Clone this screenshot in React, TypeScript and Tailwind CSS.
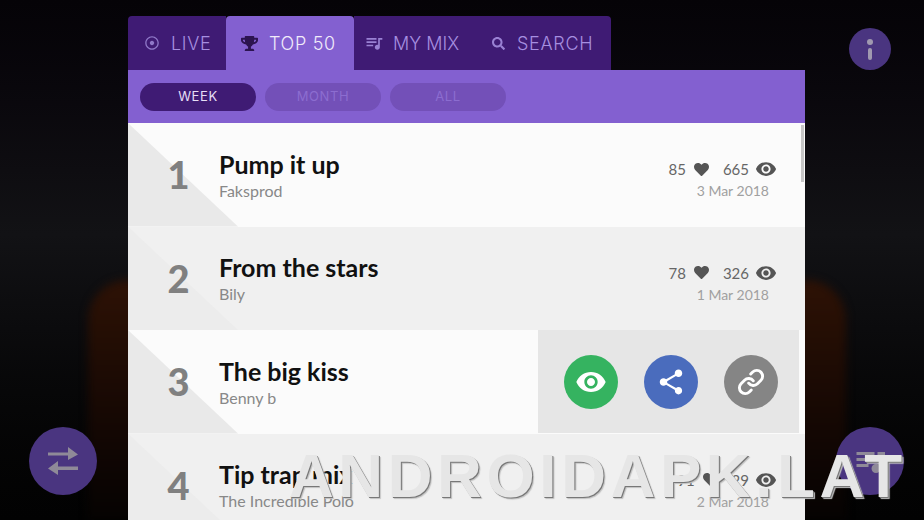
import React from "react";
import { FaRegDotCircle, FaTrophy, FaSearch, FaHeart } from "react-icons/fa";
import { MdQueueMusic, MdVisibility, MdShare } from "react-icons/md";
import { Link as LinkIcon } from "lucide-react";

const songs = [
  { rank: 1, title: "Pump it up", artist: "Faksprod", likes: 85, views: 665, date: "3 Mar 2018" },
  { rank: 2, title: "From the stars", artist: "Bily", likes: 78, views: 326, date: "1 Mar 2018" },
  { rank: 3, title: "The big kiss", artist: "Benny b", likes: 0, views: 0, date: "" },
  { rank: 4, title: "Tip trap mix", artist: "The Incredible Polo", likes: 91, views: 29, date: "2 Mar 2018" },
];

const SwapIcon = () => (
  <svg width="34" height="34" viewBox="0 0 34 34" fill="#8f8a98">
    <path d="M2 8.5h20V3l10 7.5L22 16v-4.5H2z" />
    <path d="M32 22.5H12V17L2 24.5 12 31v-5h20z" />
  </svg>
);

const Row = ({ song, even }: { song: (typeof songs)[number]; even: boolean }) => {
  return (
    <div className={`relative flex h-[103.5px] shrink-0 items-center ${even ? "bg-[#f0f0f0]" : "bg-[#fbfbfb]"}`}>
      {/* corner triangle */}
      <div
        className={`absolute bottom-0 left-0 h-full w-[110px] [clip-path:polygon(0_0,100%_100%,0_100%)] ${
          even ? "bg-[#ececec]" : "bg-[#e9e9e9]"
        }`}
      ></div>
      <div className="relative w-[91px] pl-[10px] text-center font-['Lato',sans-serif] text-[38px] font-black text-[#808080]">
        {song.rank}
      </div>
      <div className="relative flex flex-col">
        <div className="pb-[1px] font-['Lato',sans-serif] text-[25px] leading-[30px] font-bold text-[#111111]">{song.title}</div>
        <div className="mt-[1px] font-['Lato',sans-serif] text-[16px] leading-[20px] text-[#888888]">{song.artist}</div>
      </div>
      {song.date !== "" ? (
        <div className="absolute top-[33px] right-[28px] flex flex-col items-end">
          <div className="flex items-center font-['Lato',sans-serif] text-[15px] leading-[26px] text-[#666666]">
            <span>{song.likes}</span>
            <FaHeart className="mr-[14px] ml-[8px] text-[15px] text-[#555555]" />
            <span>{song.views}</span>
            <MdVisibility className="ml-[6px] text-[22px] text-[#555555]" />
          </div>
          <div className="mr-[8px] font-['Lato',sans-serif] text-[14px] leading-[18px] text-[#a0a0a0]">{song.date}</div>
        </div>
      ) : (
        <div className="absolute top-0 right-[6px] flex h-[103px] w-[261px] items-center gap-[26px] bg-[#e6e6e6] pl-[26px]">
          <div className="flex h-[54px] w-[54px] items-center justify-center rounded-full bg-[#35b360]">
            <MdVisibility className="text-[32px] text-white" />
          </div>
          <div className="flex h-[54px] w-[54px] items-center justify-center rounded-full bg-[#4a6cbd]">
            <MdShare className="text-[30px] text-white" />
          </div>
          <div className="flex h-[54px] w-[54px] items-center justify-center rounded-full bg-[#858585]">
            <LinkIcon size={28} strokeWidth={2.5} className="text-white" />
          </div>
        </div>
      )}
    </div>
  );
};

export default function App() {
  return (
    <div className="relative h-[520px] w-[924px] overflow-hidden bg-gradient-to-b from-[#050307] via-[#121215] via-45% to-[#020202]">
      {/* background blobs */}
      <div className="absolute top-[280px] left-[88px] h-[240px] w-[80px] rounded-t-full bg-gradient-to-b from-[#2e1205] to-[#060302] blur-[4px]"></div>
      <div className="absolute top-[280px] left-[766px] h-[240px] w-[80px] rounded-t-full bg-gradient-to-b from-[#2e1205] to-[#060302] blur-[4px]"></div>

      <div className="relative ml-[128px] flex h-[520px] w-[677px] flex-col pt-[16px]">
        {/* tabs */}
        <div className="flex h-[54px] w-[483px] shrink-0 font-['Inter',sans-serif] text-[18px] font-light tracking-[0.7px] text-[#a68fe0]">
          <div className="flex w-[98px] items-center gap-[12px] rounded-tl-[4px] bg-[#3f1b74] pl-[17px]">
            <FaRegDotCircle className="text-[14px] text-[#8f78c8]" />
            <span>LIVE</span>
          </div>
          <div className="flex w-[128px] items-center gap-[11px] rounded-t-[4px] bg-[#8360d0] pl-[15px] text-[#f0ebfa]">
            <FaTrophy className="text-[17px] text-[#2c1450]" />
            <span>TOP 50</span>
          </div>
          <div className="flex w-[127px] items-center gap-[9px] bg-[#3f1b74] pl-[10px]">
            <MdQueueMusic className="text-[20px] text-[#9a82d4]" />
            <span className="tracking-[0px]">MY MIX</span>
          </div>
          <div className="flex w-[130px] items-center gap-[12px] rounded-tr-[4px] bg-[#3f1b74] pl-[11px]">
            <FaSearch className="text-[13px] text-[#9a82d4]" />
            <span>SEARCH</span>
          </div>
        </div>

        {/* period filter */}
        <div className="flex h-[53px] shrink-0 items-center gap-[9px] bg-[#8360d0] pl-[12px] font-['Inter',sans-serif] text-[13px] tracking-[0.6px]">
          <div className="flex h-[28px] w-[116px] items-center justify-center rounded-full bg-[#3f1b74] text-[#e6def6]">WEEK</div>
          <div className="flex h-[28px] w-[116px] items-center justify-center rounded-full bg-[#7350b8] text-[#8c6dd0]">MONTH</div>
          <div className="flex h-[28px] w-[116px] items-center justify-center rounded-full bg-[#7350b8] text-[#8c6dd0]">ALL</div>
        </div>

        {/* list */}
        <div className="relative flex min-h-0 flex-1 flex-col overflow-hidden">
          {songs.map((song, index) => (
            <Row key={song.rank} song={song} even={index % 2 === 1} />
          ))}
          <div className="absolute top-[2px] right-[1px] h-[57px] w-[3px] bg-[#c6c6c6]"></div>
        </div>
      </div>

      {/* floating buttons */}
      <div className="absolute top-[28px] left-[849px] flex h-[42px] w-[42px] flex-col items-center justify-center gap-[3px] rounded-full bg-[#4a3580]">
        <div className="h-[6px] w-[6px] rounded-full bg-[#a099b0]"></div>
        <div className="h-[12px] w-[4px] rounded-[2px] bg-[#a099b0]"></div>
      </div>
      <div className="absolute top-[427px] left-[29px] flex h-[68px] w-[68px] items-center justify-center rounded-full bg-[#4a3580]">
        <SwapIcon />
      </div>
      <div className="absolute top-[427px] left-[836px] flex h-[68px] w-[68px] items-center justify-center rounded-full bg-[#4a3580]">
        <MdQueueMusic className="text-[36px] text-[#8f8a98]" />
      </div>

      {/* watermark */}
      <div className="absolute top-[441px] left-[289px] font-['Liberation_Sans',sans-serif] text-[62px] leading-[70px] font-bold tracking-[4.6px] whitespace-nowrap text-[#e6e6e6] [text-shadow:1px_1px_0_#777777,2px_2px_1px_#c0c0c0]">
        ANDROIDAPK.LAT
      </div>
    </div>
  );
}
